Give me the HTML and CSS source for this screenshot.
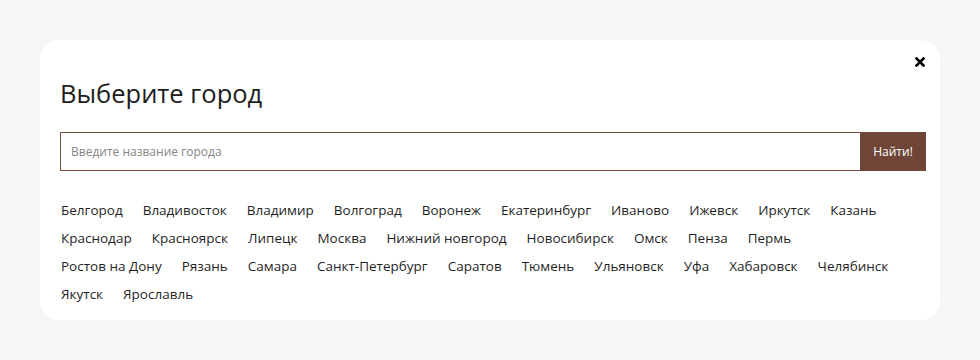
FILE: index.html
```html
<!DOCTYPE html>
<html lang="ru">
<head>
<meta charset="utf-8">
<link rel="stylesheet" href="styles.css">
</head>
<body>
<div class="modal">
  <button class="close" aria-label="Закрыть">
    <svg width="10" height="10" viewBox="0 0 10 10"><path d="M1.5 1.5L8.5 8.5M8.5 1.5L1.5 8.5" stroke="#000" stroke-width="2.6" stroke-linecap="square"/></svg>
  </button>
  <h2 class="title">Выберите город</h2>
  <form class="search">
    <input class="search-input" type="text" placeholder="Введите название города">
    <button class="search-btn" type="button">Найти!</button>
  </form>
  <ul class="cities">
    <li>Белгород</li><li>Владивосток</li><li>Владимир</li><li>Волгоград</li><li>Воронеж</li><li>Екатеринбург</li><li>Иваново</li><li>Ижевск</li><li>Иркутск</li><li>Казань</li>
    <li>Краснодар</li><li>Красноярск</li><li>Липецк</li><li>Москва</li><li>Нижний новгород</li><li>Новосибирск</li><li>Омск</li><li>Пенза</li><li>Пермь</li>
    <li>Ростов на Дону</li><li>Рязань</li><li>Самара</li><li>Санкт-Петербург</li><li>Саратов</li><li>Тюмень</li><li>Ульяновск</li><li>Уфа</li><li>Хабаровск</li><li>Челябинск</li>
    <li>Якутск</li><li>Ярославль</li>
  </ul>
</div>
</body>
</html>
```

FILE: styles.css
```css
html, body {
  margin: 0;
  padding: 0;
  background: #f5f6f8;
  font-family: "Open Sans", "Liberation Sans", sans-serif;
  color: #222;
}
body {
  padding: 40px;
}
.modal {
  position: relative;
  background: #fff;
  border-radius: 20px;
  padding: 33px 14px 14px 20px;
  height: 280px;
  box-sizing: border-box;
}
.close {
  position: absolute;
  top: 17px;
  right: 15px;
  background: none;
  border: 0;
  padding: 0;
  width: 10px;
  height: 10px;
  display: flex;
}
.title {
  margin: 0 0 19px 0;
  font-size: 25.5px;
  font-weight: 400;
  line-height: 40px;
  color: #1d1d1d;
}
.search {
  display: flex;
  height: 39px;
  margin: 0 0 25px 0;
}
.search-input {
  flex: 1;
  border: 1px solid #7a4e3f;
  border-right: 0;
  padding: 0 10px;
  font-family: inherit;
  font-size: 12px;
  color: #333;
  outline: none;
}
.search-input::placeholder {
  color: #858585;
}
.search-btn {
  width: 66px;
  background: #6e4536;
  border: 0;
  color: #fff;
  font-family: inherit;
  font-size: 12px;
  padding: 0;
}
.cities {
  list-style: none;
  margin: 0;
  padding: 0 0 0 1px;
  max-width: 840px;
  display: flex;
  flex-wrap: wrap;
  column-gap: 20px;
  font-size: 13.5px;
  line-height: 28px;
  color: #1f1f1f;
}
```
